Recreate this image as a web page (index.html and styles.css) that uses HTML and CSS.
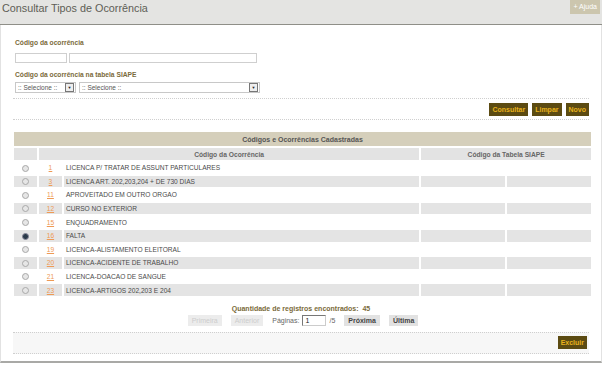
FILE: index.html
```html
<!DOCTYPE html>
<html lang="pt-BR">
  <head>
    <meta charset="UTF-8" />
    <title>Consultar Tipos de Ocorrência</title>
    <link rel="stylesheet" href="styles.css">
  </head>
  <body>
    <div class="header">
      <p class="title">Consultar Tipos de Ocorrência</p>
      <a class="help-button">+ Ajuda</a>
    </div>

    <div class="content">
      <div class="form">
        <p class="label label-first">Código da ocorrência</p>
        <div class="field-row">
          <span class="text-input input-code"></span>
          <span class="text-input input-name"></span>
        </div>
        <p class="label">Código da ocorrência na tabela SIAPE</p>
        <div class="field-row">
          <span class="select select-small"><span class="select-value">:: Selecione ::</span><span class="select-arrow">&#9660;</span></span>
          <span class="select select-large"><span class="select-value">:: Selecione ::</span><span class="select-arrow">&#9660;</span></span>
        </div>
      </div>

      <div class="toolbar">
        <button class="action-button">Consultar</button>
        <button class="action-button">Limpar</button>
        <button class="action-button">Novo</button>
      </div>

      <table class="results">
        <tr>
          <td class="caption" colspan="5">Códigos e Ocorrências Cadastradas</td>
        </tr>
        <tr class="head">
          <td class="col-radio"></td>
          <td colspan="2">Código da Ocorrência</td>
          <td colspan="2">Código da Tabela SIAPE</td>
        </tr>
        <tbody class="js-rows"></tbody>
      </table>

      <div class="pager">
        <p class="count">Quantidade de registros encontrados:&nbsp; 45</p>
        <div class="pager-row">
          <span class="pager-button disabled">Primeira</span>
          <span class="pager-button disabled">Anterior</span>
          <span class="pager-label">Páginas:</span>
          <span class="page-input">1</span>
          <span class="pager-label">/5</span>
          <span class="pager-button">Próxima</span>
          <span class="pager-button">Última</span>
        </div>
      </div>

      <div class="footer-bar">
        <button class="action-button">Excluir</button>
      </div>
    </div>

    <script>
      const rows = [
        ['1', 'LICENCA P/ TRATAR DE ASSUNT PARTICULARES'],
        ['3', 'LICENCA ART. 202,203,204 + DE 730 DIAS'],
        ['11', 'APROVEITADO EM OUTRO ORGAO'],
        ['12', 'CURSO NO EXTERIOR'],
        ['15', 'ENQUADRAMENTO'],
        ['16', 'FALTA'],
        ['19', 'LICENCA-ALISTAMENTO ELEITORAL'],
        ['20', 'LICENCA-ACIDENTE DE TRABALHO'],
        ['21', 'LICENCA-DOACAO DE SANGUE'],
        ['23', 'LICENCA-ARTIGOS 202,203 E 204']
      ];

      let html = '';
      rows.forEach(function(row, i) {
        const rowClass = i % 2 === 1 ? 'row-even' : 'row-odd';
        const checked = row[0] === '16' ? ' checked' : '';
        html += `<tr class="${rowClass}">
          <td class="col-radio"><span class="radio${checked}"></span></td>
          <td class="col-number"><a>${row[0]}</a></td>
          <td class="col-desc">${row[1]}</td>
          <td class="col-siape"></td>
          <td class="col-siape"></td>
        </tr>`;
      });
      document.querySelector('.js-rows').innerHTML = html;
    </script>
  </body>
</html>
```

FILE: styles.css
```css
body{
  margin: 0;
  background-color: white;
  font-family: "Liberation Sans", Arial, sans-serif;
  color: #444;
}
.header{
  display: flex;
  justify-content: space-between;
  align-items: flex-start;
  height: 24px;
  background-color: #e4e4e2;
  border-bottom: 1px solid #8f8f88;
}
.title{
  margin: 0;
  padding: 1px 0 0 2px;
  font-size: 10.8px;
  line-height: 14px;
  color: #5e5e56;
}
.help-button{
  margin-right: 2px;
  padding: 0 3px;
  height: 14px;
  line-height: 14px;
  background-color: #ccc6ae;
  color: white;
  font-size: 7px;
}
.content{
  height: 336px;
  padding: 0 12px;
  border-left: 1px solid #e2e2e2;
  border-right: 1px solid #e2e2e2;
  border-bottom: 2px solid #a9a9a6;
}
.form{
  padding-left: 2px;
}
.label{
  margin: 0;
  padding-top: 7px;
  height: 10px;
  line-height: 10px;
  font-size: 6.7px;
  font-weight: bold;
  color: #7a6a3a;
}
.label-first{
  padding-top: 13px;
  margin-bottom: 5px;
}
.field-row{
  display: flex;
  gap: 2px;
  height: 10px;
}
.text-input{
  height: 8px;
  border: 1px solid #cfcfcf;
  background-color: white;
}
.input-code{
  width: 50px;
}
.input-name{
  width: 186px;
}
.select{
  display: flex;
  justify-content: space-between;
  align-items: center;
  height: 9px;
  border: 1px solid #c8c8c8;
  font-size: 6.5px;
  color: #555;
  margin-top: 2px;
}
.select-value{
  padding-left: 2px;
}
.select-small{
  width: 59px;
  margin-right: 1px;
}
.select-large{
  width: 179px;
}
.select-arrow{
  display: flex;
  align-items: center;
  justify-content: center;
  width: 7px;
  height: 7px;
  margin-right: 1px;
  border: 1px solid #777;
  background-color: #eee;
  font-size: 4px;
  color: #222;
}
.toolbar{
  display: flex;
  justify-content: flex-end;
  align-items: center;
  gap: 4px;
  margin-top: 8px;
  height: 20px;
  border-top: 1px dotted #cfcfcf;
  border-bottom: 1px dotted #cfcfcf;
}
.action-button{
  height: 13px;
  padding: 0 3px;
  border: none;
  background-color: #5c4b12;
  color: #e8b21c;
  font-family: "Liberation Sans", Arial, sans-serif;
  font-size: 7px;
  font-weight: bold;
  cursor: pointer;
}
.results{
  margin-top: 10px;
  margin-left: -1px;
  width: 581px;
  border-spacing: 2px;
  font-size: 6.6px;
}
.results td{
  padding: 0;
  height: 11.6px;
}
.caption{
  height: 14px !important;
  background-color: #d5cfbb;
  text-align: center;
  font-weight: bold;
  font-size: 7px;
  color: #555;
}
.head td{
  height: 12px !important;
  background-color: #e3e3e3;
  text-align: center;
  font-weight: bold;
  font-size: 6.7px;
  color: #666;
}
.col-radio{
  width: 23px;
  text-align: center;
}
.col-number{
  width: 23px;
  text-align: center;
}
.col-number a{
  color: #ee9a55;
  text-decoration: underline;
}
.col-desc{
  width: 354px;
  padding-left: 2px !important;
  color: #4a4a4a;
}
.col-siape{
  width: 84px;
}
.row-even td{
  background-color: #e4e4e4;
}
.radio{
  display: inline-block;
  width: 5px;
  height: 5px;
  border: 1px solid #a8a8a8;
  border-radius: 50%;
  background-color: #e6e6e6;
  vertical-align: middle;
}
.radio.checked{
  background-color: #2a3a4a;
  border-color: #889;
}
.pager{
  text-align: center;
  margin-top: 6px;
}
.count{
  margin: 0;
  font-size: 7px;
  font-weight: bold;
  color: #7a6a3a;
  line-height: 9px;
}
.pager-row{
  display: flex;
  justify-content: center;
  align-items: center;
  gap: 9px;
  height: 12px;
  margin-top: 2px;
  margin-left: 4px;
  font-size: 7px;
}
.pager-button{
  height: 11px;
  line-height: 11px;
  padding: 0 4px;
  background-color: #e2e2e2;
  font-weight: bold;
  color: #444;
}
.pager-button.disabled{
  background-color: #ececec;
  color: #cdcdcd;
  font-weight: normal;
}
.pager-label{
  color: #666;
}
.page-input{
  width: 20px;
  height: 9px;
  line-height: 9px;
  text-align: left;
  padding-left: 2px;
  border: 1px solid #ccc;
  border-top-color: #777;
  border-left-color: #777;
  margin: 0 -6px;
  color: #222;
}
.footer-bar{
  display: flex;
  justify-content: flex-end;
  align-items: center;
  margin-top: 5px;
  height: 20px;
  padding-right: 2px;
  background-color: #f7f7f7;
  border-top: 1px dotted #cfcfcf;
  border-bottom: 1px dotted #cfcfcf;
}
```
